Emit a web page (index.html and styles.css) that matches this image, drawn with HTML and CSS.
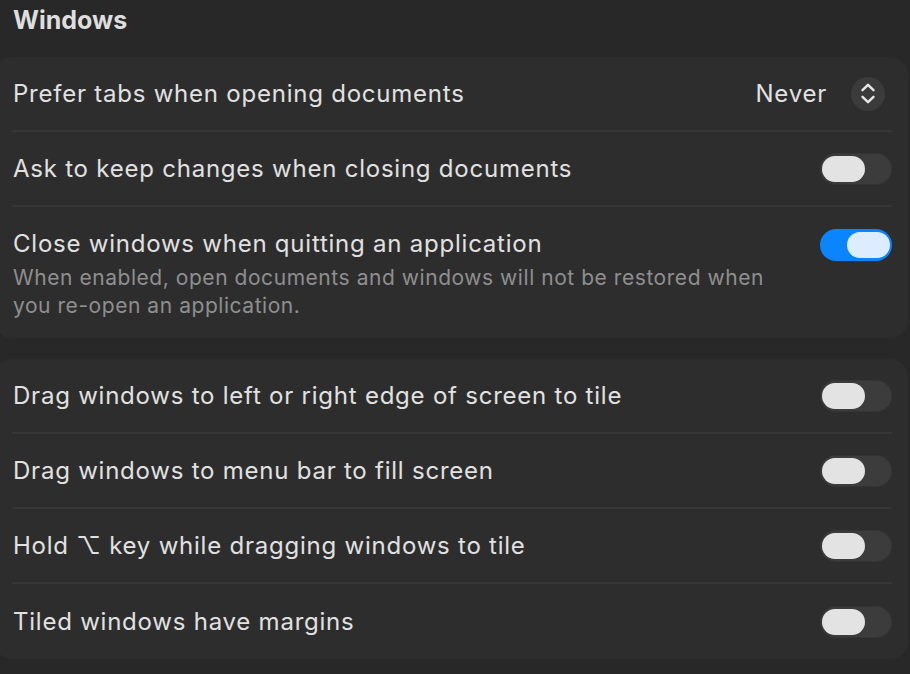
FILE: index.html
```html
<!DOCTYPE html>
<html>
<head>
<meta charset="utf-8">
<link rel="stylesheet" href="styles.css">
</head>
<body>
<div class="page">
  <h1 class="title">Windows</h1>
  <div class="panel">
    <div class="row">
      <span class="label">Prefer tabs when opening documents</span>
      <div class="popup">
        <span class="popup-value">Never</span>
        <span class="stepper">
          <svg width="34" height="34" viewBox="0 0 34 34"><path d="M11.5 13.2 L17 7.8 L22.5 13.2 M11.5 19.8 L17 25.2 L22.5 19.8" fill="none" stroke="#e6e6e6" stroke-width="2.4" stroke-linecap="round" stroke-linejoin="round"/></svg>
        </span>
      </div>
    </div>
    <div class="row">
      <span class="label">Ask to keep changes when closing documents</span>
      <span class="toggle"><span class="knob"></span></span>
    </div>
    <div class="row row-tall">
      <div class="text-block">
        <span class="label">Close windows when quitting an application</span>
        <span class="sub">When enabled, open documents and windows will not be restored when you re-open an application.</span>
      </div>
      <span class="toggle on"><span class="knob"></span></span>
    </div>
  </div>
  <div class="panel">
    <div class="row">
      <span class="label">Drag windows to left or right edge of screen to tile</span>
      <span class="toggle"><span class="knob"></span></span>
    </div>
    <div class="row">
      <span class="label">Drag windows to menu bar to fill screen</span>
      <span class="toggle"><span class="knob"></span></span>
    </div>
    <div class="row">
      <span class="label">Hold ⌥ key while dragging windows to tile</span>
      <span class="toggle"><span class="knob"></span></span>
    </div>
    <div class="row">
      <span class="label">Tiled windows have margins</span>
      <span class="toggle"><span class="knob"></span></span>
    </div>
  </div>
</div>
</body>
</html>
```
FILE: styles.css
```css
html, body {
  margin: 0;
  padding: 0;
  background: #282828;
  overflow: hidden;
}
body {
  width: 910px;
  height: 674px;
  font-family: Inter, "Noto Sans", sans-serif;
  color: #e1e1e1;
}
.page {
  margin-left: -6px;
  width: 914px;
  padding-top: 4px;
}
.title {
  margin: 0 0 0 19px;
  font-size: 25px;
  font-weight: 700;
  line-height: 32px;
  height: 53px;
  color: #dedede;
}
.panel {
  background: #2d2d2d;
  border-radius: 18px;
  margin-bottom: 21px;
  display: flex;
  flex-direction: column;
}
.row {
  display: flex;
  align-items: center;
  justify-content: space-between;
  height: 75px;
  margin: 0 16px 0 18px;
  padding-left: 1px;
  border-bottom: 2px solid #363636;
  box-sizing: border-box;
}
.row:last-child {
  border-bottom: none;
}
.row-tall {
  height: 131px;
  align-items: flex-start;
  padding-top: 21px;
}
.row-tall .toggle {
  margin-top: 1px;
}
.label {
  font-size: 24px;
  letter-spacing: 0.77px;
  line-height: 30px;
}
.text-block {
  display: flex;
  flex-direction: column;
  padding-top: 1px;
}
.sub {
  font-size: 21px;
  color: #8f8f8f;
  line-height: 28px;
  width: 770px;
  margin-top: 5px;
  letter-spacing: 0.55px;
}
.popup {
  display: flex;
  align-items: center;
  gap: 24px;
  margin-right: 7px;
}
.popup-value {
  font-size: 24px;
  letter-spacing: 0.77px;
}
.stepper {
  width: 34px;
  height: 34px;
  border-radius: 50%;
  background: #3b3b3b;
  display: flex;
}
.toggle {
  width: 72px;
  height: 32px;
  border-radius: 16px;
  background: #3c3c3c;
  box-shadow: inset 0 0 0 1px #353535;
  position: relative;
  flex-shrink: 0;
}
.knob {
  position: absolute;
  left: 2px;
  top: 3px;
  width: 43px;
  height: 26px;
  border-radius: 13px;
  background: #e3e3e3;
}
.toggle.on {
  background: #0a84ff;
  box-shadow: none;
}
.toggle.on .knob {
  left: auto;
  right: 2px;
  background: #ddecff;
}
```
